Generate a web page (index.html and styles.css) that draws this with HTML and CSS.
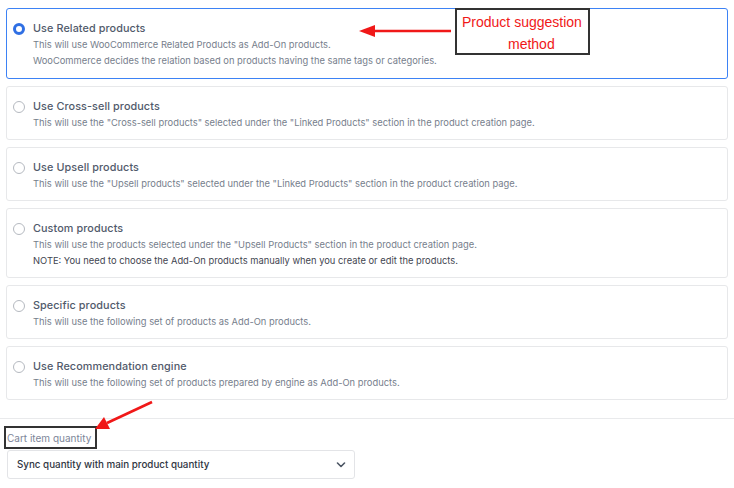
FILE: index.html
```html
<!DOCTYPE html>
<html>
<head>
<meta charset="utf-8">
<link rel="stylesheet" href="styles.css">
</head>
<body>
<div class="page">
  <div class="options">
    <div class="card selected">
      <span class="radio on"></span>
      <div class="body">
        <div class="title">Use Related products</div>
        <div class="desc">This will use WooCommerce Related Products as Add-On products.</div>
        <div class="desc">WooCommerce decides the relation based on products having the same tags or categories.</div>
      </div>
    </div>
    <div class="card">
      <span class="radio"></span>
      <div class="body">
        <div class="title">Use Cross-sell products</div>
        <div class="desc">This will use the "Cross-sell products" selected under the "Linked Products" section in the product creation page.</div>
      </div>
    </div>
    <div class="card">
      <span class="radio"></span>
      <div class="body">
        <div class="title">Use Upsell products</div>
        <div class="desc">This will use the "Upsell products" selected under the "Linked Products" section in the product creation page.</div>
      </div>
    </div>
    <div class="card">
      <span class="radio"></span>
      <div class="body">
        <div class="title">Custom products</div>
        <div class="desc">This will use the products selected under the "Upsell Products" section in the product creation page.</div>
        <div class="desc note">NOTE: You need to choose the Add-On products manually when you create or edit the products.</div>
      </div>
    </div>
    <div class="card">
      <span class="radio"></span>
      <div class="body">
        <div class="title">Specific products</div>
        <div class="desc">This will use the following set of products as Add-On products.</div>
      </div>
    </div>
    <div class="card">
      <span class="radio"></span>
      <div class="body">
        <div class="title">Use Recommendation engine</div>
        <div class="desc">This will use the following set of products prepared by engine as Add-On products.</div>
      </div>
    </div>
  </div>
  <div class="sep"></div>
  <div class="qty">
    <div class="label-wrap"><span class="label">Cart item quantity</span></div>
    <div class="select">
      <span>Sync quantity with main product quantity</span>
      <svg class="chev" width="10" height="6" viewBox="0 0 10 6"><path d="M1.5 1 L5 4.5 L8.5 1" fill="none" stroke="#4b5563" stroke-width="1.6" stroke-linecap="round" stroke-linejoin="round"/></svg>
    </div>
  </div>

  <div class="callout">Product suggestion<br><span class="l2">method</span></div>
  <svg class="arrows" width="734" height="488" viewBox="0 0 734 488">
    <line x1="451" y1="31" x2="372" y2="31" stroke="#f01818" stroke-width="2.6"/>
    <polygon points="359,31 375,25 375,37" fill="#f01818"/>
    <line x1="152" y1="402" x2="107" y2="423" stroke="#f01818" stroke-width="2.6"/>
    <polygon points="95,429 104,417 110,429" fill="#f01818"/>
  </svg>
</div>
</body>
</html>
```
FILE: styles.css
```css
* { box-sizing: border-box; }
html, body { margin: 0; padding: 0; background: #fff; }
body { font-family: Inter, "Noto Sans", "Liberation Sans", sans-serif; }
.page { position: relative; width: 734px; height: 488px; overflow: hidden; }
.options { display: flex; flex-direction: column; gap: 7px; padding: 8px 6px 0 6px; }
.card {
  display: flex; align-items: flex-start;
  border: 1px solid #e7e8ea; border-radius: 3px;
  padding: 11px 10px 8px 6px;
  width: 722px;
}
.card.selected { border-color: #3d82f5; border-width: 1.5px; padding: 11px 10px 9px 6px; }
.radio {
  flex: none; width: 12px; height: 12px; border-radius: 50%;
  border: 1px solid #b5b9c0; margin-top: 2.5px; margin-right: 8px; background: #fff;
}
.radio.on { border: 3.5px solid #2f6fe4; }
.body { display: flex; flex-direction: column; }
.title { font-size: 10.8px; font-weight: 500; color: #515a6b; line-height: 17px; height: 17px; letter-spacing: 0.1px; }
.desc { font-size: 9.35px; color: #767e8c; line-height: 16px; height: 16px; }
.desc.note { color: #3f4550; }
.sep { height: 1px; background: #e9eaec; margin-top: 18px; }
.qty { padding: 7px 7px 0 7px; }
.label-wrap { display: flex; margin-left: -3px; }
.label {
  border: 2px solid #333; padding: 4px 4px 2px 1px;
  font-size: 10px; color: #7d8699; line-height: 13px;
}
.select {
  width: 348px; height: 29px; margin-top: 1px;
  border: 1px solid #e3e4e7; border-radius: 3px;
  display: flex; align-items: center; justify-content: space-between;
  padding: 0 8px 0 9px;
  font-size: 9.8px; color: #2f3542; font-weight: 500;
}
.callout {
  position: absolute; left: 455px; top: 8px; width: 135px; height: 47px;
  border: 2px solid #333; background: #fff;
  font-family: "Liberation Sans", Arial, sans-serif; font-size: 14px; color: #f01818;
  line-height: 22px; padding: 1px 0 0 5px;
}
.callout .l2 { padding-left: 46px; }
.arrows { position: absolute; left: 0; top: 0; pointer-events: none; }
```
